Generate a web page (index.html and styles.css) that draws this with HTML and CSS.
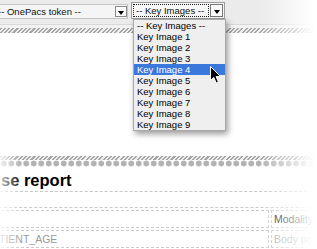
FILE: index.html
```html
<!DOCTYPE html>
<html lang="en">
<head>
    <meta charset="UTF-8">
    <title>Key images</title>
    <link rel="stylesheet" href="styles.css">
</head>
<body>
    <div class="screen">
        <div class="toolbar">
            <div class="select select-token">
                <span class="select-label">-- OnePacs token --</span>
                <span class="select-arrow"></span>
            </div>
            <div class="select select-keys">
                <span class="select-label is-focus">-- Key Images --</span>
                <span class="select-arrow"></span>
                <ul class="options">
                    <li>-- Key Images --</li>
                    <li>Key Image 1</li>
                    <li>Key Image 2</li>
                    <li>Key Image 3</li>
                    <li class="is-active">Key Image 4</li>
                    <li>Key Image 5</li>
                    <li>Key Image 6</li>
                    <li>Key Image 7</li>
                    <li>Key Image 8</li>
                    <li>Key Image 9</li>
                </ul>
            </div>
        </div>
        <div class="hatch"></div>
        <div class="workspace"></div>
        <div class="hatch hatch-thin"></div>
        <div class="dots"></div>
        <h1 class="report-title">se report</h1>
        <table class="fields">
            <tr>
                <td class="field-label"></td>
                <td class="field-value">Modality</td>
            </tr>
            <tr>
                <td class="field-label">TIENT_AGE</td>
                <td class="field-value muted">Body part</td>
            </tr>
        </table>

        <!-- mouse pointer over the open list -->
        <svg class="cursor" width="13" height="20" viewBox="0 0 13 20">
            <path d="M1.5 1.5 L1.5 15.5 L4.8 12.4 L7.2 18 L9.4 17 L7.1 11.6 L11.6 11.6 Z" fill="#000" stroke="#fff" stroke-width="1" stroke-linejoin="round"/>
        </svg>

        <div class="fade"></div>
        <div class="fade-left"></div>
    </div>
</body>
</html>
```

FILE: styles.css
```css
body {
    margin: 0;
    background: #fff;
    font-family: "Liberation Sans", Arial, sans-serif;
    overflow: hidden;
}

.screen {
    position: relative;
    width: 317px;
    height: 249px;
    overflow: hidden;
}

/* top toolbar */
.toolbar {
    height: 25px;
    box-sizing: border-box;
    padding-top: 3px;
    background: #ebebeb;
    border-bottom: 1px solid #d9d9d9;
    display: flex;
    align-items: flex-start;
    gap: 3px;
}

.select {
    position: relative;
    display: flex;
    align-items: center;
    box-sizing: border-box;
    font-size: 9.5px;
    color: #111;
    white-space: nowrap;
}

.select-token {
    margin-left: -8px;
    margin-top: 1px;
    width: 136px;
    height: 15px;
    border: 1px solid #c4c4c4;
    background: #f5f5f5;
}

.select-token .select-label {
    flex: 1;
    padding-left: 5px;
}

.select-keys {
    margin-top: -1px;
    width: 94px;
    height: 17px;
    padding: 1px;
    gap: 1px;
    border: 1px solid #9c9c9c;
    background: #f6f6f6;
}

.select-label.is-focus {
    flex: 1;
    height: 100%;
    box-sizing: border-box;
    padding-left: 2px;
    border: 1px dotted #222;
    line-height: 11px;
}

.select-arrow {
    position: relative;
    box-sizing: border-box;
    width: 12px;
    height: 11px;
    border: 1px solid #8a8a8a;
    background: #fafafa;
}

.select-keys .select-arrow {
    width: 13px;
    height: 13px;
    border-color: #777;
}

.select-arrow::after {
    content: "";
    position: absolute;
    left: 50%;
    top: 50%;
    margin: -1px 0 0 -3px;
    border-left: 3px solid transparent;
    border-right: 3px solid transparent;
    border-top: 4px solid #000;
}

/* open option list */
.options {
    position: absolute;
    left: 1px;
    top: 16px;
    z-index: 2;
    width: 93px;
    box-sizing: border-box;
    margin: 0;
    padding: 0;
    list-style: none;
    background: #efefef;
    border: 1px solid #a9a9a9;
    box-shadow: 2px 3px 6px rgba(0, 0, 0, 0.4);
}

.options li {
    height: 11px;
    line-height: 11px;
    padding-left: 3px;
    color: #000;
}

.options li.is-active {
    background: #3b78dc;
    color: #fff;
}

.hatch {
    height: 5px;
    border-top: 3px solid #f2f2f2;
    background: repeating-linear-gradient(135deg, #a4a4a4 0 1.5px, #f0f0f0 1.5px 3px);
}

.hatch-thin {
    height: 4px;
    border-top: none;
}

.workspace {
    height: 123px;
}

.dots {
    height: 7px;
    background: radial-gradient(circle, #b3b3b3 0 2.7px, transparent 3.3px);
    background-size: 7.5px 7px;
}

.report-title {
    margin: 3px 0 0;
    padding: 0 0 1px 1px;
    font-size: 16.5px;
    line-height: 20px;
    font-weight: bold;
    color: #000;
    border-bottom: 1px dashed #c6c6c6;
}

/* field table */
.fields {
    margin: 15px 0 0 -6px;
    width: 360px;
    table-layout: fixed;
    border-collapse: separate;
    border-spacing: 2px;
    border-top: 1px dashed #c9c9c9;
}

.fields td {
    box-sizing: border-box;
    height: 18px;
    padding: 0 2px;
    border: 1px dashed #c9c9c9;
    font-size: 10.5px;
    vertical-align: middle;
    white-space: nowrap;
}

.fields .field-label {
    width: 273px;
    color: #9a9a9a;
}

.field-value {
    color: #111;
}

.field-value.muted {
    color: #aaa;
}

.cursor {
    position: absolute;
    left: 209px;
    top: 65px;
    z-index: 3;
}

/* edge fade of the screenshot */
.fade {
    position: absolute;
    inset: 0;
    z-index: 1;
    pointer-events: none;
    background: linear-gradient(to right, rgba(255, 255, 255, 0) 258px, rgba(255, 255, 255, 0.55) 290px, #fff 314px);
}

.fade-left {
    position: absolute;
    left: 0;
    top: 150px;
    bottom: 0;
    width: 22px;
    z-index: 1;
    pointer-events: none;
    background: linear-gradient(to right, rgba(255, 255, 255, 0.8), rgba(255, 255, 255, 0));
}
```
